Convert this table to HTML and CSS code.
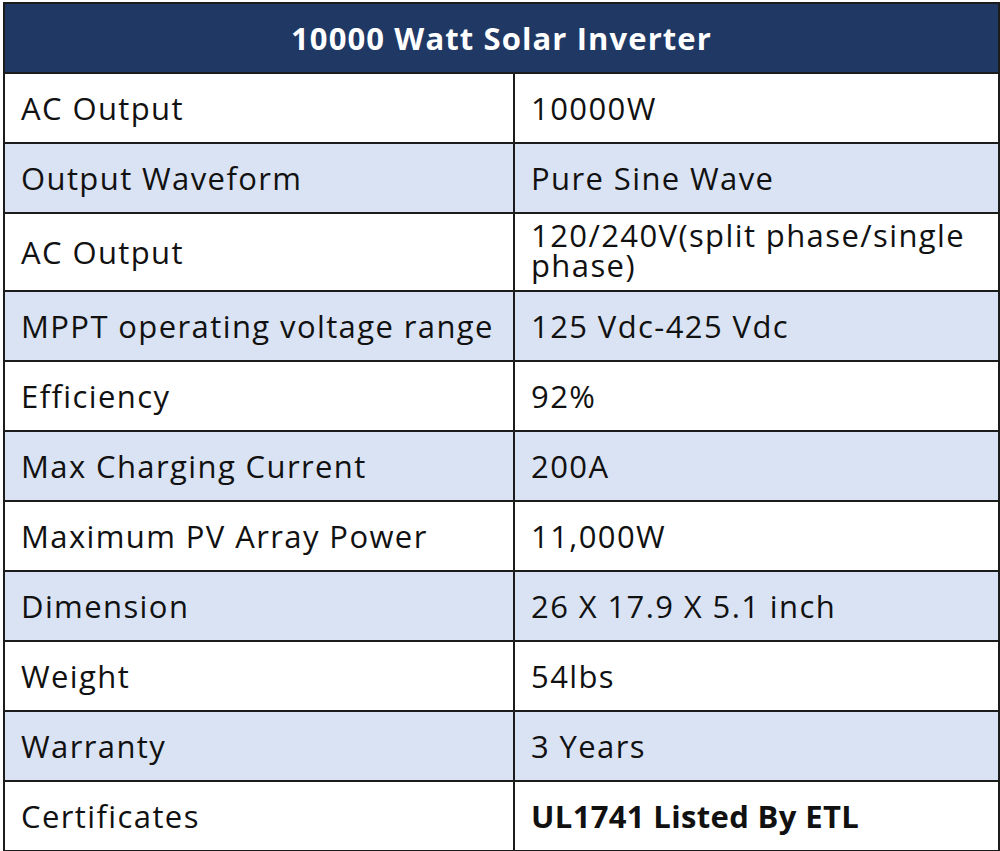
FILE: index.html
```html
<!DOCTYPE html>
<html>
<head>
<meta charset="utf-8">
<link rel="stylesheet" href="styles.css">
</head>
<body>
<table class="spec">
  <colgroup><col class="ck"><col class="cv"></colgroup>
  <thead>
    <tr><th colspan="2" class="title">10000 Watt Solar Inverter</th></tr>
  </thead>
  <tbody>
    <tr class="w"><td class="k">AC Output</td><td class="v">10000W</td></tr>
    <tr class="b"><td class="k">Output Waveform</td><td class="v">Pure Sine Wave</td></tr>
    <tr class="w tall"><td class="k">AC Output</td><td class="v top">120/240V(split phase/single phase)</td></tr>
    <tr class="b"><td class="k">MPPT operating voltage range</td><td class="v">125 Vdc-425 Vdc</td></tr>
    <tr class="w"><td class="k">Efficiency</td><td class="v">92%</td></tr>
    <tr class="b"><td class="k">Max Charging Current</td><td class="v">200A</td></tr>
    <tr class="w"><td class="k">Maximum PV Array Power</td><td class="v">11,000W</td></tr>
    <tr class="b"><td class="k">Dimension</td><td class="v">26 X 17.9 X 5.1 inch</td></tr>
    <tr class="w"><td class="k">Weight</td><td class="v">54lbs</td></tr>
    <tr class="b"><td class="k">Warranty</td><td class="v">3 Years</td></tr>
    <tr class="w"><td class="k">Certificates</td><td class="v bold">UL1741 Listed By ETL</td></tr>
  </tbody>
</table>
</body>
</html>
```
FILE: styles.css
```css
html, body {
  margin: 0;
  padding: 0;
  background: #ffffff;
}
body {
  padding: 2px 0 0 3px;
}
.spec {
  border-collapse: collapse;
  width: 995px;
  table-layout: fixed;
  font-family: "Open Sans", "Liberation Sans", sans-serif;
  color: #111111;
}
.ck { width: 510px; }
.cv { width: 485px; }
.spec th, .spec td {
  border: 2px solid #1c1c1c;
  box-sizing: border-box;
}
.title {
  background: #203864;
  color: #ffffff;
  font-family: "Open Sans", sans-serif;
  font-weight: 700;
  font-size: 31px;
  letter-spacing: 1.1px;
  height: 70px;
  text-align: center;
  padding: 0;
}
.spec td {
  height: 70px;
  font-size: 31px;
  letter-spacing: 1.4px;
  padding: 0 16px;
  vertical-align: middle;
  line-height: 30px;
}
.w td { background: #ffffff; }
.b td { background: #dae3f3; }
.tall td { height: 78px; }
.spec td.top { vertical-align: top; padding-top: 6px; }
.spec td.bold {
  font-family: "Open Sans", sans-serif;
  font-weight: 700;
  font-size: 31px;
  letter-spacing: 0.35px;
}
```
